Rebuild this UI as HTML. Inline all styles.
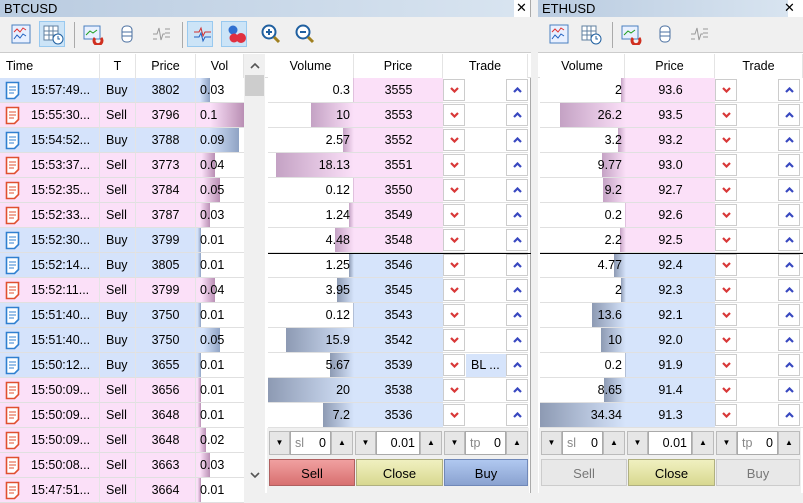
<!DOCTYPE html><html><head><meta charset="utf-8"><style>
*{box-sizing:border-box;margin:0;padding:0}
body{width:803px;height:493px;background:#f0f0f0;font-family:"Liberation Sans",sans-serif;font-size:12.5px;color:#000;position:relative;overflow:hidden}
.a{position:absolute}
.title{background:linear-gradient(90deg,#b9cbe0,#d8e4f0);height:17px;font-size:13px;padding:1px 4px;line-height:15px}
.tb{background:#f0f0f0}
.ic{position:absolute;width:22px;height:22px;top:23px}
.sel{background:#cce4f7;border:1px solid #99c9ef;width:26px;height:26px;top:21px}
.hd{top:54px;height:24px;line-height:24px;text-align:center;background:#fff;border-right:1px solid #e4e4e4}
.c{position:absolute;height:25px;line-height:24px;border-bottom:1px solid #e0e0e0;white-space:nowrap;overflow:hidden}
.r{text-align:right;padding-right:4px}
.ctr{text-align:center}
.bx{position:absolute;width:22px;height:22px;border:1px solid #ccc;background:#fff}
.bx svg{position:absolute;left:6px;top:7px}
.btn{position:absolute;top:459px;height:27px;line-height:27px;text-align:center;font-size:13px;border:1px solid #aaa}
.sp{position:absolute;top:431px;height:24px;border:1px solid #bbb;background:#e6e6e6;text-align:center;line-height:22px;font-size:8px}
.inp{position:absolute;top:431px;height:24px;border:1px solid #aaa;background:#fff;line-height:22px;padding:0 4px;font-size:12.5px}
</style></head><body>
<div class="a" style="left:0;top:0;width:531px;height:493px;background:#fff;border-right:1px solid #aaa"></div>
<div class="a title" style="left:0;top:0;width:514px">BTCUSD</div>
<div class="a" style="left:516px;top:0;font-size:13px">✕</div>
<div class="a tb" style="left:0;top:17px;width:531px;height:36px;border-bottom:1px solid #ccc"></div>
<div class="a title" style="left:538px;top:0;width:250px">ETHUSD</div>
<div class="a" style="left:784px;top:0;font-size:13px">✕</div>
<div class="a" style="left:538px;top:0;width:265px;height:493px;background:#fff;z-index:-1"></div>
<div class="a tb" style="left:538px;top:17px;width:265px;height:36px;border-bottom:1px solid #ccc"></div>
<div id="root"></div>
<script>
var h='';function d(s){h+=s}
var DN='<svg width="9" height="6" viewBox="0 0 9 6"><path d="M1 1l3.5 3.5L8 1" stroke="#d83838" stroke-width="2.2" fill="none"/></svg>';
var UP='<svg width="9" height="6" viewBox="0 0 9 6"><path d="M1 5l3.5-3.5L8 5" stroke="#3848c0" stroke-width="2.2" fill="none"/></svg>';
function icons(x0,all){
 var xs=all?[10,42,82,116,150,192,226,260,294]:[10,42,82,116,150];
 if(all){d('<div class="a sel" style="left:'+(x0+39)+'px"></div><div class="a sel" style="left:'+(x0+187)+'px"></div><div class="a sel" style="left:'+(x0+221)+'px"></div>');}
 d('<div class="a" style="left:'+(x0+74)+'px;top:22px;width:1px;height:26px;background:#aaa"></div>');
 if(all)d('<div class="a" style="left:'+(x0+182)+'px;top:22px;width:1px;height:26px;background:#aaa"></div>');
 var sv=[
 '<rect x="2" y="2" width="18" height="18" fill="#e8f0ff" stroke="#4a7fc0"/><path d="M4 9l3-3 3 3 3-4 3 2" stroke="#e03030" fill="none"/><path d="M4 16l3-4 3 3 3-4 3 2" stroke="#2060c0" fill="none"/>',
 '<rect x="2" y="3" width="14" height="14" fill="#fff" stroke="#6080a0"/><path d="M2 8h14M2 12h14M7 3v14M11 3v14" stroke="#6080a0"/><circle cx="16" cy="16" r="5" fill="#fff" stroke="#2060a0"/><path d="M16 13v3h2" stroke="#2060a0" fill="none"/>',
 '<rect x="2" y="3" width="16" height="13" fill="#e8f0ff" stroke="#4a7fc0"/><path d="M4 12l4-4 3 2 4-3" stroke="#20a020" fill="none"/><path d="M13 15a4 4 0 1 0 6 0" stroke="#d03020" stroke-width="3" fill="none"/>',
 '<rect x="6" y="3" width="10" height="16" rx="4" fill="#fff" stroke="#4a6fa0"/><path d="M6 9h10M6 13h10" stroke="#4a6fa0"/>',
 '<path d="M3 11h4l2-6 2 12 2-6h2M15 6h5M15 10h5M15 14h5M3 16h4" stroke="#999" fill="none"/>',
 '<path d="M2 9h5l2-4 2 8 2-4h6" stroke="#d03030" fill="none"/><path d="M2 14h5l2-4 2 8 2-4h6" stroke="#2060c0" fill="none"/>',
 '<circle cx="7" cy="7" r="4.5" fill="#3070d0"/><circle cx="15" cy="15" r="5" fill="#e03040"/><circle cx="8" cy="15" r="4.5" fill="#e03040"/>',
 '<circle cx="9" cy="9" r="6.5" fill="#fff" stroke="#2060a0" stroke-width="2"/><path d="M6 9h6M9 6v6" stroke="#2060a0" stroke-width="2"/><path d="M14 14l5 5" stroke="#a08020" stroke-width="3"/>',
 '<circle cx="9" cy="9" r="6.5" fill="#fff" stroke="#2060a0" stroke-width="2"/><path d="M6 9h6" stroke="#2060a0" stroke-width="2"/><path d="M14 14l5 5" stroke="#a08020" stroke-width="3"/>'];
 for(var i=0;i<xs.length;i++)d('<svg class="ic" style="left:'+(x0+xs[i])+'px" viewBox="0 0 22 22">'+sv[i]+'</svg>');
}
icons(0,1);icons(538,0);
function hd(x,w,t){d('<div class="a hd" style="left:'+x+'px;width:'+w+'px">'+t+'</div>')}
d('<div class="a" style="left:0;top:53px;width:531px;height:25px;background:#fff;border-bottom:1px solid #ddd"></div>');
hd(0,100,'<span style="margin-left:-60px">Time</span>');hd(100,36,'T');hd(136,60,'Price');hd(196,48,'Vol');
hd(268,86,'Volume');hd(354,89,'Price');hd(443,85,'Trade');
d('<div class="a" style="left:538px;top:53px;width:265px;height:25px;background:#fff;border-bottom:1px solid #ddd"></div>');
hd(540,85,'Volume');hd(625,90,'Price');hd(715,88,'Trade');
d('<div class="a" style="left:244px;top:54px;width:21px;height:439px;background:#f0f0f0"></div><div class="a" style="left:245px;top:75px;width:19px;height:21px;background:#cdcdcd"></div>');
d('<svg class="a" style="left:250px;top:62px" width="10" height="7"><path d="M1 6l4-4 4 4" stroke="#555" stroke-width="1.6" fill="none"/></svg>');
d('<svg class="a" style="left:250px;top:472px" width="10" height="7"><path d="M1 1l4 4 4-4" stroke="#555" stroke-width="1.6" fill="none"/></svg>');
var ts=[['15:57:49','Buy',3802,'0.03'],['15:55:30','Sell',3796,'0.1'],['15:54:52','Buy',3788,'0.09'],['15:53:37','Sell',3773,'0.04'],['15:52:35','Sell',3784,'0.05'],['15:52:33','Sell',3787,'0.03'],['15:52:30','Buy',3799,'0.01'],['15:52:14','Buy',3805,'0.01'],['15:52:11','Sell',3799,'0.04'],['15:51:40','Buy',3750,'0.01'],['15:51:40','Buy',3750,'0.05'],['15:50:12','Buy',3655,'0.01'],['15:50:09','Sell',3656,'0.01'],['15:50:09','Sell',3648,'0.01'],['15:50:09','Sell',3648,'0.02'],['15:50:08','Sell',3663,'0.03'],['15:47:51','Sell',3664,'0.01']];
ts.forEach(function(r,i){var y=78+i*25,b=r[1]=='Buy',bg=b?'#d5e3fb':'#fbe0f8',dk=b?'#8fa3c4':'#b98fb4',ic=b?'#3080d0':'#e05030';
 d('<div class="c" style="left:0;top:'+y+'px;width:100px;background:'+bg+';border-right:1px solid #e4e4e4"><svg style="position:absolute;left:5px;top:3px" width="16" height="19" viewBox="0 0 16 19"><path d="M1.5 1.5h12v12l-4 4h-8z" fill="#fff" stroke="'+ic+'" stroke-width="1.6"/><path d="M4 6h7M4 9h7M4 12h5" stroke="'+ic+'"/></svg><span style="position:absolute;left:31px">'+r[0]+'...</span></div>');
 d('<div class="c" style="left:100px;top:'+y+'px;width:36px;background:'+bg+';border-right:1px solid #e4e4e4;padding-left:6px">'+r[1]+'</div>');
 d('<div class="c ctr" style="left:136px;top:'+y+'px;width:60px;background:'+bg+';border-right:1px solid #e4e4e4">'+r[2]+'</div>');
 var w=Math.round(parseFloat(r[3])/.1*48);
 d('<div class="c" style="left:196px;top:'+y+'px;width:48px;background:#fff"><div style="position:absolute;left:0;top:0;height:24px;width:'+w+'px;background:linear-gradient(90deg,'+bg+' 30%,'+dk+')"></div><span style="position:relative;padding-left:4px">'+r[3]+'</span></div>');
});
function dom(x0,rows,max,sepAfter,pw){
 var vw=86,tx=x0+vw+pw;
 rows.forEach(function(r,i){var y=78+i*25,ask=i<sepAfter,pbg=ask?'#fbe0f8':'#d6e4fb';
  var w=Math.round(r[0]/max*vw);
  var g=ask?'linear-gradient(90deg,#c4a2c4,#fbe0f8)':'linear-gradient(90deg,#8d9ab3,#d6e4fb)';
  d('<div class="c r" style="left:'+x0+'px;top:'+y+'px;width:'+vw+'px;background:#fff"><div style="position:absolute;right:0;top:0;height:24px;width:'+w+'px;background:'+g+'"></div><span style="position:relative">'+r[0]+'</span></div>');
  d('<div class="c ctr" style="left:'+(x0+vw)+'px;top:'+y+'px;width:'+pw+'px;background:'+pbg+'">'+r[1]+'</div>');
  d('<div class="c" style="left:'+tx+'px;top:'+y+'px;width:'+(x0==268?85:88)+'px;background:#fff"></div>');
  d('<div class="bx" style="left:'+tx+'px;top:'+(y+1)+'px">'+DN+'</div>');
  d('<div class="bx" style="left:'+(tx+63)+'px;top:'+(y+1)+'px">'+UP+'</div>');
  if(r[2])d('<div class="a" style="left:'+(tx+23)+'px;top:'+(y+1)+'px;width:40px;height:23px;background:#d6e4fb;line-height:23px;padding-left:5px">'+r[2]+'</div>');
 });
 d('<div class="a" style="left:'+x0+'px;top:253px;width:'+(vw+pw+88)+'px;height:1px;background:#000"></div>');
}
dom(268,[[0.3,3555],[10,3553],[2.57,3552],[18.13,3551],[0.12,3550],[1.24,3549],[4.48,3548],[1.25,3546],[3.95,3545],[0.12,3543],[15.9,3542],[5.67,3539,'BL ...'],[20,3538],[7.2,3536]],20,7,89);
dom(540,[[2,'93.6'],[26.2,'93.5'],[3.2,'93.2'],[9.77,'93.0'],[9.2,'92.7'],[0.2,'92.6'],[2.2,'92.5'],[4.77,'92.4'],[2,'92.3'],[13.6,'92.1'],[10,'92.0'],[0.2,'91.9'],[8.65,'91.4'],[34.34,'91.3']],34.34,7,89);
function ctl(x0,en){
 d('<div class="a" style="left:'+(x0-2)+'px;top:428px;width:262px;height:65px;background:#f0f0f0"></div>');
 var sp=function(x,w,t){d('<div class="sp" style="left:'+x+'px;width:'+w+'px">'+t+'</div>')};
 sp(x0,21,'▼');d('<div class="inp" style="left:'+(x0+21)+'px;width:41px"><span style="color:#888">sl</span><span style="float:right">0</span></div>');sp(x0+62,22,'▲');
 sp(x0+86,21,'▼');d('<div class="inp" style="left:'+(x0+107)+'px;width:44px;text-align:right">0.01</div>');sp(x0+151,22,'▲');
 sp(x0+175,21,'▼');d('<div class="inp" style="left:'+(x0+196)+'px;width:41px"><span style="color:#888">tp</span><span style="float:right">0</span></div>');sp(x0+237,22,'▲');
 var cl='<div class="btn" style="left:'+(x0+87)+'px;width:87px;background:linear-gradient(#f0f0c0,#d8d890);border-color:#b0b080">Close</div>';
 if(en){d('<div class="btn" style="left:'+x0+'px;width:86px;background:linear-gradient(#f0a0a0,#d87070);border-color:#b06060">Sell</div>'+cl+'<div class="btn" style="left:'+(x0+175)+'px;width:84px;background:linear-gradient(#b0c8f0,#8aa2d0);border-color:#7088b8">Buy</div>');}
 else{d('<div class="btn" style="left:'+x0+'px;width:86px;background:#e8e8e8;color:#777;border-color:#ccc">Sell</div>'+cl+'<div class="btn" style="left:'+(x0+175)+'px;width:84px;background:#e8e8e8;color:#777;border-color:#ccc">Buy</div>');}
}
ctl(269,1);ctl(541,0);
document.getElementById('root').innerHTML=h;
</script>
</body></html>
